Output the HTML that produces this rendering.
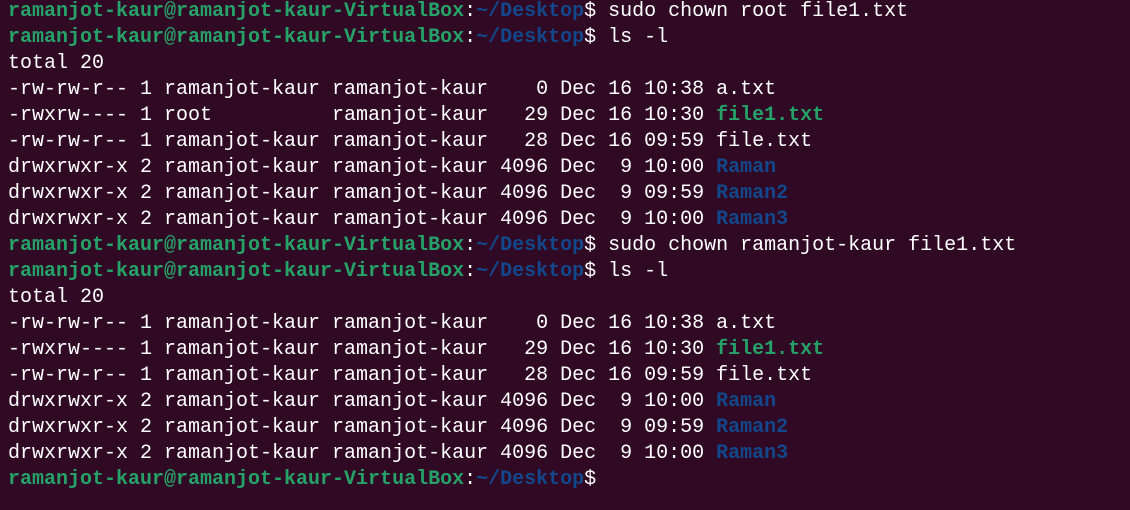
<!DOCTYPE html>
<html><head><meta charset="utf-8"><style>
html,body{margin:0;padding:0;background:#300a24;width:1130px;height:510px;overflow:hidden}
pre{margin:0;position:absolute;left:8px;top:-1px;font-family:"Liberation Mono",monospace;font-size:20px;line-height:26px;color:#ffffff}
.g{color:#26a269;font-weight:bold}
.b{color:#12488b;font-weight:bold}
.f{color:#26a269;font-weight:bold}
</style></head><body><pre><span class="g">ramanjot-kaur@ramanjot-kaur-VirtualBox</span>:<span class="b">~/Desktop</span>$ sudo chown root file1.txt
<span class="g">ramanjot-kaur@ramanjot-kaur-VirtualBox</span>:<span class="b">~/Desktop</span>$ ls -l
total 20
-rw-rw-r-- 1 ramanjot-kaur ramanjot-kaur    0 Dec 16 10:38 a.txt
-rwxrw---- 1 root          ramanjot-kaur   29 Dec 16 10:30 <span class="f">file1.txt</span>
-rw-rw-r-- 1 ramanjot-kaur ramanjot-kaur   28 Dec 16 09:59 file.txt
drwxrwxr-x 2 ramanjot-kaur ramanjot-kaur 4096 Dec  9 10:00 <span class="b">Raman</span>
drwxrwxr-x 2 ramanjot-kaur ramanjot-kaur 4096 Dec  9 09:59 <span class="b">Raman2</span>
drwxrwxr-x 2 ramanjot-kaur ramanjot-kaur 4096 Dec  9 10:00 <span class="b">Raman3</span>
<span class="g">ramanjot-kaur@ramanjot-kaur-VirtualBox</span>:<span class="b">~/Desktop</span>$ sudo chown ramanjot-kaur file1.txt
<span class="g">ramanjot-kaur@ramanjot-kaur-VirtualBox</span>:<span class="b">~/Desktop</span>$ ls -l
total 20
-rw-rw-r-- 1 ramanjot-kaur ramanjot-kaur    0 Dec 16 10:38 a.txt
-rwxrw---- 1 ramanjot-kaur ramanjot-kaur   29 Dec 16 10:30 <span class="f">file1.txt</span>
-rw-rw-r-- 1 ramanjot-kaur ramanjot-kaur   28 Dec 16 09:59 file.txt
drwxrwxr-x 2 ramanjot-kaur ramanjot-kaur 4096 Dec  9 10:00 <span class="b">Raman</span>
drwxrwxr-x 2 ramanjot-kaur ramanjot-kaur 4096 Dec  9 09:59 <span class="b">Raman2</span>
drwxrwxr-x 2 ramanjot-kaur ramanjot-kaur 4096 Dec  9 10:00 <span class="b">Raman3</span>
<span class="g">ramanjot-kaur@ramanjot-kaur-VirtualBox</span>:<span class="b">~/Desktop</span>$</pre></body></html>
